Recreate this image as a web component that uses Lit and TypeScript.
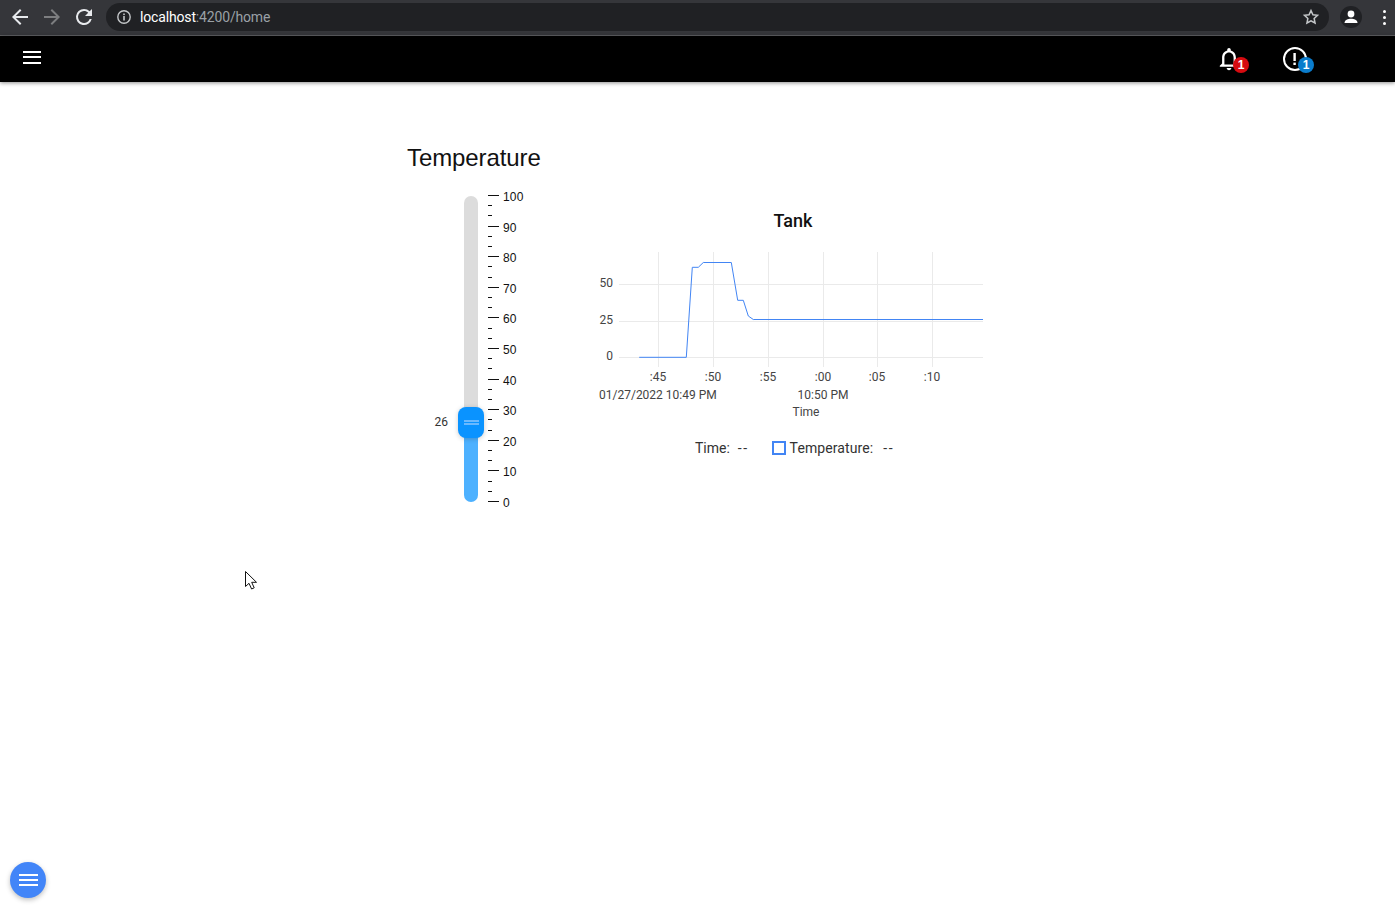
import { LitElement, html, css, svg } from "lit";
import { customElement } from "lit/decorators.js";

const SY = (v: number) => Math.floor(501.5 - v * 3.06) + 0.5;

@customElement("app-root")
export class AppRoot extends LitElement {
  static styles = css`
    :host { display: block; position: relative; height: 916px; overflow: hidden; background: #fff; font-family: Roboto, sans-serif; }
    .chrome { display: flex; align-items: flex-start; height: 35px; background: #35363a; border-bottom: 1px solid #5f6063; box-sizing: content-box; }
    .navs { display: flex; align-items: center; gap: 8px; width: 106px; height: 34px; padding-left: 8px; box-sizing: border-box; flex: none; }
    .navs svg { display: block; flex: none; }
    .omni { flex: none; width: 1223px; height: 28px; margin-top: 3px; border-radius: 14px; background: #202124; display: flex; align-items: center; box-sizing: border-box; padding-left: 10px; }
    .url { margin-left: 8px; font-size: 14px; letter-spacing: -0.16px; color: #9aa0a6; white-space: nowrap; }
    .url b { font-weight: 400; color: #fff; }
    .star { margin-left: auto; margin-right: 9px; display: block; }
    .profile { flex: none; width: 22px; height: 22px; margin: 6px 0 0 11px; border-radius: 50%; background: #202124; display: flex; align-items: center; justify-content: center; }
    .dots { flex: none; margin: 10px 0 0 21px; display: flex; flex-direction: column; gap: 3px; }
    .dots i { width: 3px; height: 3px; background: #fff; border-radius: 50%; display: block; }
    .nav { height: 46px; background: #000; display: flex; align-items: center; box-shadow: 0 1px 4px rgba(0,0,0,.45); position: relative; }
    .burger { margin-left: 23px; width: 18px; display: flex; flex-direction: column; gap: 3.5px; margin-top: -4px; }
    .burger i { display: block; height: 2px; background: #fff; }
    .alerts { margin-left: auto; display: flex; gap: 37px; margin-right: 86px; }
    .alert { position: relative; width: 28px; height: 28px; }
    .alert svg { display: block; }
    .badge { position: absolute; left: 17px; top: 12px; width: 16px; height: 16px; border-radius: 50%; color: #fff; font: 700 12px/16px "Liberation Sans", Arial, sans-serif; text-align: center; }
    .red { background: #d60b10; }
    .blue { background: #0a7ccc; }
    main { padding: 62px 0 0 407px; }
    h1 { margin: 0; font: 400 24px/28px "Liberation Sans", Arial, sans-serif; letter-spacing: -0.1px; color: #111; }
    .row { display: flex; margin-top: 14px; align-items: flex-start; }
    .slider { display: flex; gap: 10px; padding-left: 57px; align-items: flex-start; }
    .track { position: relative; width: 14px; height: 306px; margin-top: 10px; border-radius: 7px; overflow: visible; display: flex; flex-direction: column; }
    .upper { flex: 1; background: #dcdcdc; border-radius: 7px 7px 0 0; }
    .lower { height: 80px; background: #4db1ff; border-radius: 0 0 7px 7px; }
    .thumb { position: absolute; left: -6px; top: 211px; width: 26px; height: 31px; border-radius: 8px; background: #0a93ff; box-shadow: 0 1px 5px rgba(0,0,0,.2); display: flex; flex-direction: column; justify-content: center; align-items: center; gap: 1px; }
    .thumb i { display: block; width: 15px; height: 2px; background: #6ab9ff; }
    .value { position: absolute; right: 30px; top: 219px; font-size: 12px; line-height: 14px; color: #333; }
    .scale, .plot { display: block; flex: none; }
    .scale text { font: 12px "Liberation Sans", Arial, sans-serif; letter-spacing: 0.2px; fill: #111; }
    .chart { margin: 14px 0 0 62px; }
    .plot text { font: 12px Roboto, sans-serif; fill: #444; }
    .plot .title { font: 500 18px Roboto, sans-serif; fill: #111; }
    .legend { display: flex; align-items: center; height: 20px; margin-top: 8px; padding-left: 105px; font-size: 14px; color: #333; white-space: nowrap; }
    .temp { letter-spacing: 0.1px; }
    .sw { width: 10px; height: 10px; border: 2px solid #4285f4; margin-left: 23px; margin-right: 4px; flex: none; }
    .dash { margin-left: 8px; letter-spacing: 1.5px; }
    .temp + .dash { margin-left: 10px; }
    .fab { position: absolute; left: 10px; top: 862px; width: 36px; height: 36px; border-radius: 50%; background: #4285f8; box-shadow: 0 2px 5px rgba(0,0,0,.25); display: flex; flex-direction: column; gap: 3px; align-items: center; justify-content: center; }
    .fab i { display: block; width: 19px; height: 2px; background: #fff; }
    .cursor { position: absolute; left: 244px; top: 570px; display: block; }
  `;

  private scale() {
    const els = [];
    for (let i = 0; i <= 30; i++) {
      const v = (i * 10) / 3;
      const y = SY(v);
      const major = i % 3 === 0;
      els.push(svg`<line x1="488" x2=${major ? 499 : 492} y1=${y} y2=${y} stroke="#111" shape-rendering="crispEdges"></line>`);
      if (major) els.push(svg`<text x="503" y=${y + 5.5}>${Math.round(v)}</text>`);
    }
    return els;
  }

  private plot() {
    const vs = [658, 713, 768, 823, 877, 932];
    const hs: [number, string][] = [[284, "50"], [321, "25"], [357, "0"]];
    const tl = [":45", ":50", ":55", ":00", ":05", ":10"];
    return svg`
      <text class="title" x="793" y="227" text-anchor="middle">Tank</text>
      ${vs.map((x) => svg`<line x1=${x + 0.5} x2=${x + 0.5} y1="252" y2="367" stroke="#eaeaea"></line>`)}
      ${hs.map(([y, l]) => svg`
        <line x1="619" x2="983" y1=${y + 0.5} y2=${y + 0.5} stroke="#eaeaea"></line>
        <text x="613" y=${y + 2.5} text-anchor="end">${l}</text>`)}
      <polyline fill="none" stroke="#4285f4" stroke-width="1" points="639.2,357.3 686.3,357.3 692.3,267.3 698.3,267.3 703.3,262.5 731.3,262.5 737.7,300.3 743.3,300.3 748.3,316 753.3,319.5 983,319.5"></polyline>
      ${vs.map((x, i) => svg`<text x=${x} y="381" text-anchor="middle">${tl[i]}</text>`)}
      <text x="599" y="399">01/27/2022 10:49 PM</text>
      <text x="823" y="399" text-anchor="middle">10:50 PM</text>
      <text x="806" y="416" text-anchor="middle">Time</text>
    `;
  }

  render() {
    return html`
      <div class="chrome">
        <div class="navs">
          <svg width="24" height="24" viewBox="0 0 24 24"><path d="M20 11H7.8l5.6-5.6L12 4l-8 8 8 8 1.4-1.4L7.8 13H20z" fill="#e8eaed"/></svg>
          <svg width="24" height="24" viewBox="0 0 24 24"><path d="M4 11h12.2l-5.6-5.6L12 4l8 8-8 8-1.4-1.4 5.6-5.6H4z" fill="#7d7e80"/></svg>
          <svg width="24" height="24" viewBox="0 0 24 24"><path d="M17.65 6.35A7.96 7.96 0 0 0 12 4a8 8 0 1 0 7.73 10h-2.08A6 6 0 1 1 12 6c1.66 0 3.14.69 4.22 1.78L13 11h7V4z" fill="#e8eaed"/></svg>
        </div>
        <div class="omni">
          <svg width="16" height="16" viewBox="0 0 16 16"><circle cx="8" cy="8" r="6.2" fill="none" stroke="#c4c7c9" stroke-width="1.4"/><rect x="7.2" y="7" width="1.6" height="4.5" fill="#c4c7c9"/><rect x="7.2" y="4.5" width="1.6" height="1.6" fill="#c4c7c9"/></svg>
          <span class="url"><b>localhost</b>:4200/home</span>
          <svg class="star" width="18" height="18" viewBox="0 0 24 24"><path d="M12 3.5l2.6 5.6 6.1.7-4.5 4.2 1.2 6L12 17l-5.4 3 1.2-6-4.5-4.2 6.1-.7z" fill="none" stroke="#c4c7c9" stroke-width="2" stroke-linejoin="miter"/></svg>
        </div>
        <div class="profile"><svg width="16" height="16" viewBox="0 0 16 16"><circle cx="8" cy="5" r="3.4" fill="#fff"/><path d="M1.5 14c0-3 3.5-4.3 6.5-4.3s6.5 1.3 6.5 4.3z" fill="#fff"/></svg></div>
        <div class="dots"><i></i><i></i><i></i></div>
      </div>
      <div class="nav">
        <div class="burger"><i></i><i></i><i></i></div>
        <div class="alerts">
          <div class="alert">
            <svg width="28" height="28" viewBox="0 0 28 28"><path transform="translate(-0.8 0) scale(1.15)" fill="#fff" d="M12 22c1.1 0 2-.9 2-2h-4c0 1.1.9 2 2 2zm6-6v-5c0-3.07-1.63-5.64-4.5-6.32V4c0-.83-.67-1.5-1.5-1.5s-1.5.67-1.5 1.5v.68C7.64 5.36 6 7.92 6 11v5l-2 2v1h16v-1l-2-2zm-2 1H8v-6c0-2.48 1.51-4.5 4-4.5s4 2.02 4 4.5v6z"/></svg>
            <span class="badge red">1</span>
          </div>
          <div class="alert">
            <svg width="28" height="28" viewBox="0 0 28 28"><circle cx="14" cy="14" r="11" fill="none" stroke="#fff" stroke-width="2"/><rect x="12.4" y="8" width="2.4" height="8" fill="#fff"/><rect x="12.4" y="17.6" width="2.4" height="2.4" fill="#fff"/></svg>
            <span class="badge blue">1</span>
          </div>
        </div>
      </div>
      <main>
        <h1>Temperature</h1>
        <div class="row">
          <div class="slider">
            <div class="track">
              <div class="upper"></div>
              <div class="lower"></div>
              <div class="thumb"><i></i><i></i></div>
              <span class="value">26</span>
            </div>
            <svg class="scale" width="40" height="330" viewBox="488 186 40 330">${this.scale()}</svg>
          </div>
          <div class="chart">
            <svg class="plot" width="410" height="230" viewBox="590 200 410 230">${this.plot()}</svg>
            <div class="legend">
              <span>Time:</span><span class="dash">--</span>
              <span class="sw"></span>
              <span class="temp">Temperature:</span><span class="dash">--</span>
            </div>
          </div>
        </div>
      </main>
      <div class="fab"><i></i><i></i><i></i></div>
      <svg class="cursor" width="16" height="22" viewBox="0 0 16 22"><path d="M1.5 1.5v15l3.5-3.2 2.6 5.7 2.6-1.2-2.5-5.5h4.8z" fill="#fff" stroke="#111" stroke-width="1"/></svg>
    `;
  }
}
